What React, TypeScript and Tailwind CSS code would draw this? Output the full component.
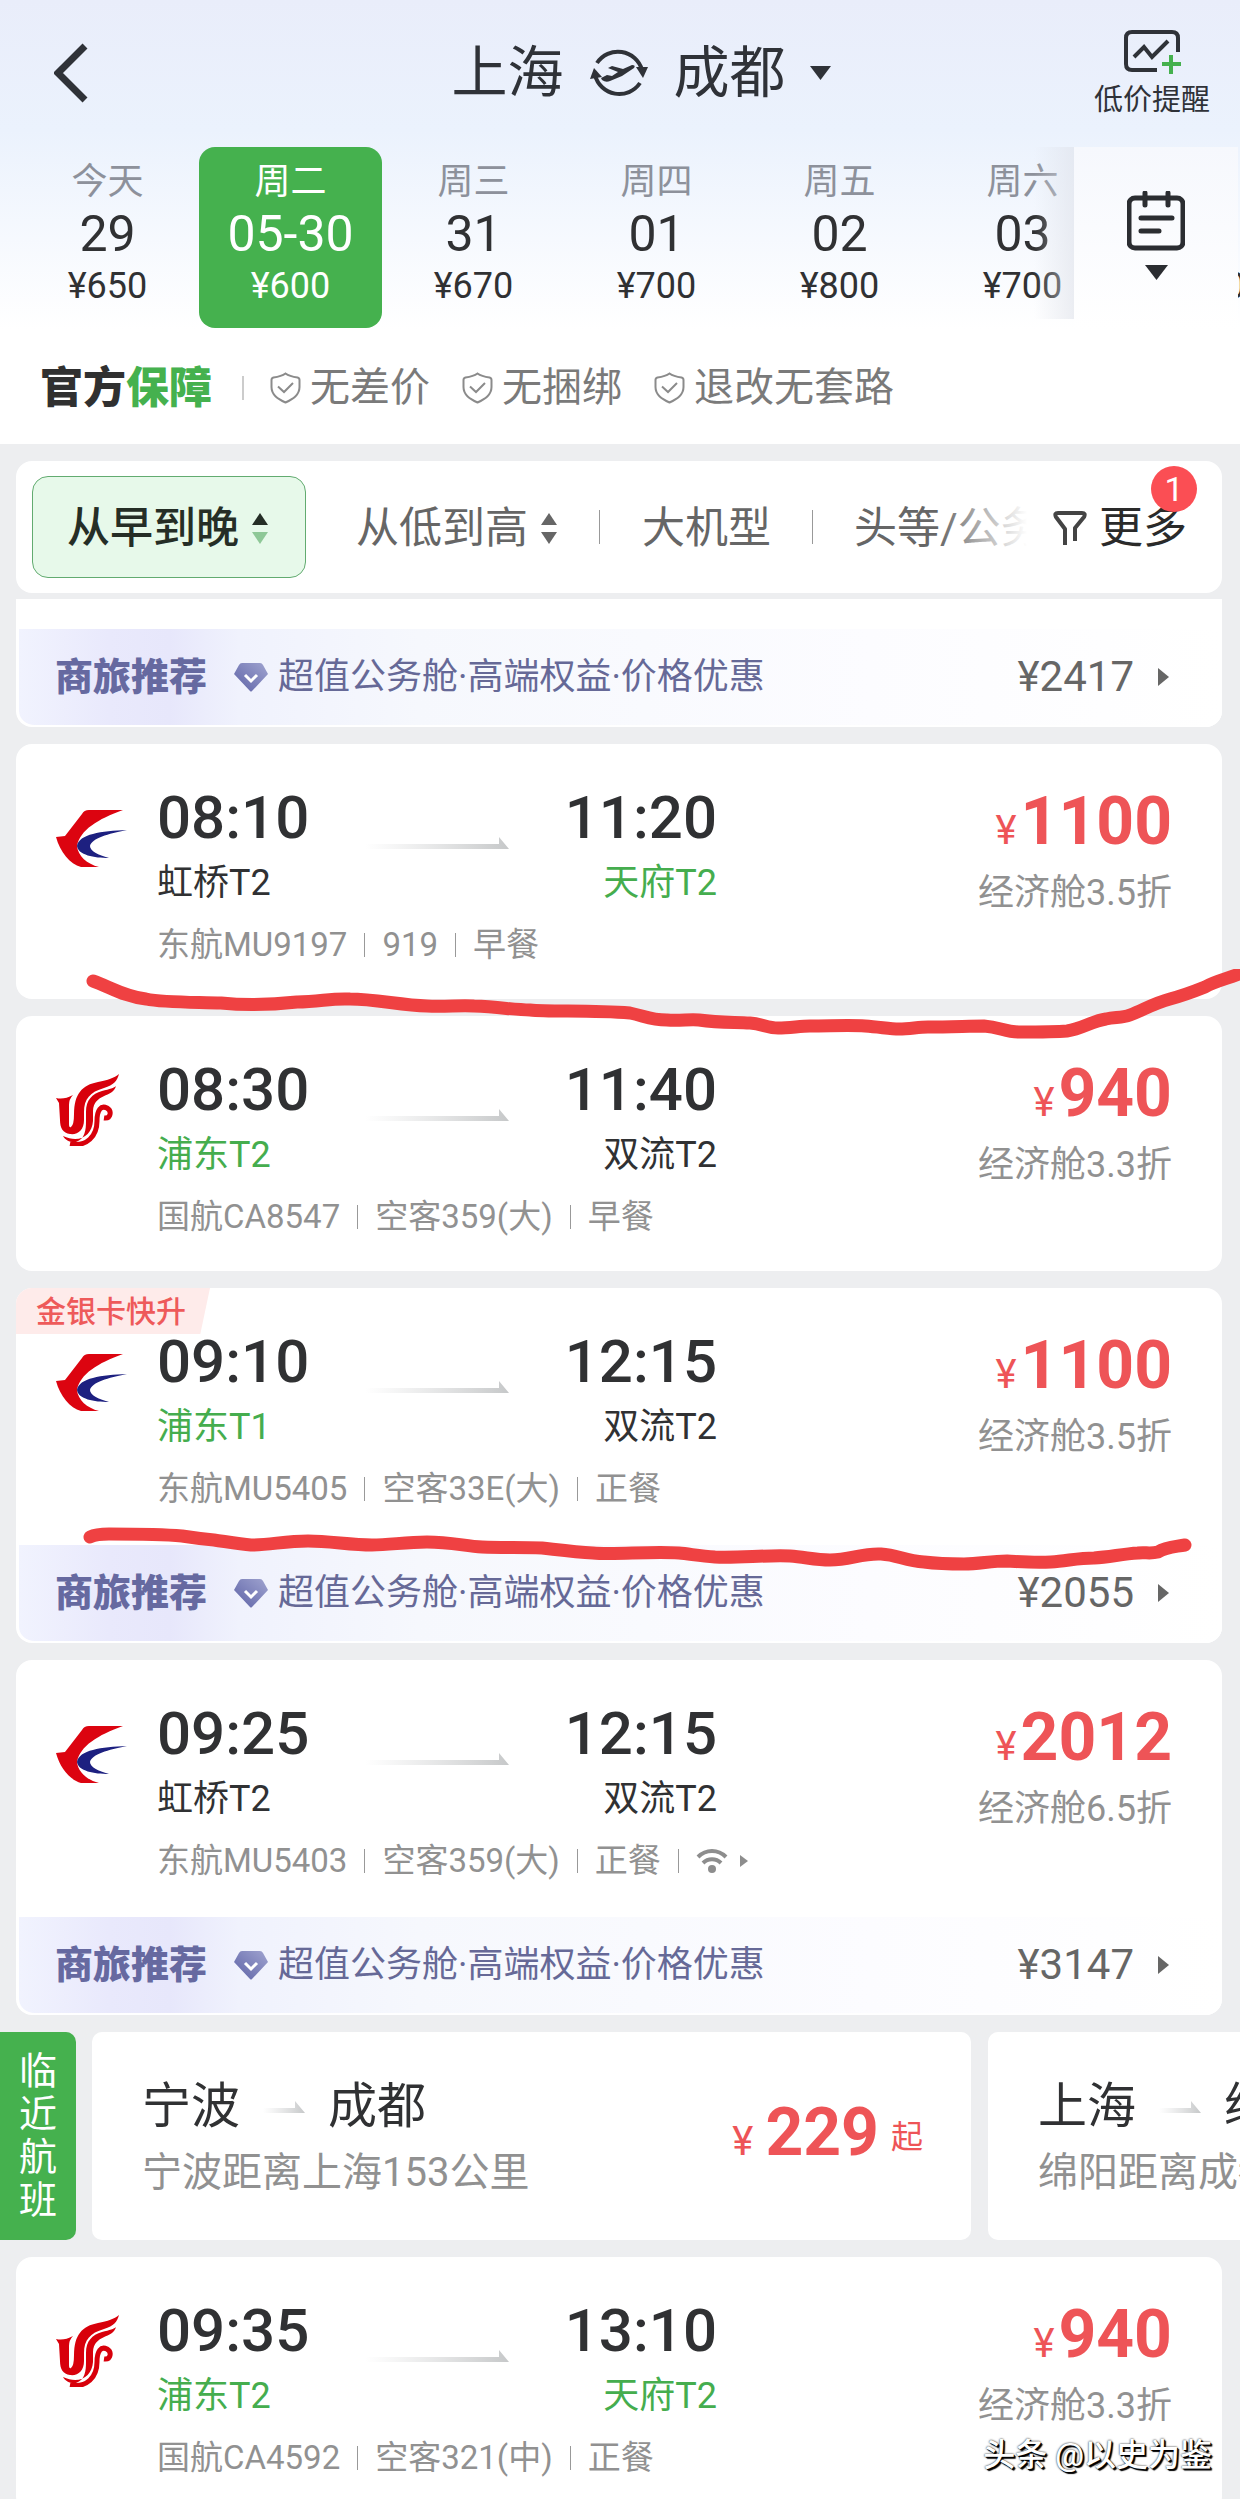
import clsx from "clsx";

type Airline = "mu" | "ca";

type Flight = {
  airline: Airline;
  depart: string;
  arrive: string;
  from: string;
  to: string;
  fromGreen?: boolean;
  toGreen?: boolean;
  price: string;
  cabin: string;
  meta: string[];
  wifi?: boolean;
  tag?: string;
  business?: string;
  mark?: string;
};

const dates = [
  { week: "今天", day: "29", price: "¥650" },
  { week: "周二", day: "05-30", price: "¥600", active: true },
  { week: "周三", day: "31", price: "¥670" },
  { week: "周四", day: "01", price: "¥700" },
  { week: "周五", day: "02", price: "¥800" },
  { week: "周六", day: "03", price: "¥700" },
  { week: "周日", day: "04", price: "¥700" },
];

const promises = ["无差价", "无捆绑", "退改无套路"];

const flights: Flight[] = [
  {
    airline: "mu",
    depart: "08:10",
    arrive: "11:20",
    from: "虹桥T2",
    to: "天府T2",
    toGreen: true,
    price: "1100",
    cabin: "经济舱3.5折",
    meta: ["东航MU9197", "919", "早餐"],
    mark: "M93 12C108 17 125 28 146 30C165 34 200 33 221 34C240 36 270 36 297 33C320 33 330 29 350 30C375 30 400 36 427 37C445 38 460 36 474 37C500 38 515 41 530 41C550 43 590 41 630 44C645 47 650 51 667 51C680 52 690 50 699 51C720 54 735 53 750 54C762 55 768 59 778 59C790 59 800 57 810 57C830 57 850 56 865 57C880 58 890 60 899 60C910 60 918 58 928 58C950 58 970 57 984 57C1000 58 1005 63 1019 63C1040 63 1055 63 1067 62C1082 60 1092 52 1106 50C1115 48 1122 49 1130 46C1145 40 1155 34 1170 30C1185 26 1195 22 1205 18C1215 12 1230 9 1244 3",
  },
  {
    airline: "ca",
    depart: "08:30",
    arrive: "11:40",
    from: "浦东T2",
    to: "双流T2",
    fromGreen: true,
    price: "940",
    cabin: "经济舱3.3折",
    meta: ["国航CA8547", "空客359(大)", "早餐"],
  },
  {
    airline: "mu",
    depart: "09:10",
    arrive: "12:15",
    from: "浦东T1",
    to: "双流T2",
    fromGreen: true,
    price: "1100",
    cabin: "经济舱3.5折",
    meta: ["东航MU5405", "空客33E(大)", "正餐"],
    tag: "金银卡快升",
    business: "¥2055",
    mark: "M90 24C96 21 102 21 109 21C140 21 160 21 182 23C195 25 203 26 214 27C228 29 240 31 251 32C270 32 285 28 308 28C330 28 350 32 372 32C390 32 405 29 427 29C450 29 465 33 482 34C505 35 520 34 542 35C560 37 575 39 593 40C615 42 650 38 679 40C690 41 700 43 715 44C740 45 765 42 790 43C805 44 815 47 830 47C850 47 862 40 881 41C898 42 905 48 924 49C940 51 950 51 964 51C980 51 990 48 1007 48C1025 49 1035 50 1051 49C1067 48 1078 45 1094 45C1110 44 1122 41 1138 40C1145 39 1150 41 1158 39C1166 34 1174 34 1185 32",
  },
  {
    airline: "mu",
    depart: "09:25",
    arrive: "12:15",
    from: "虹桥T2",
    to: "双流T2",
    price: "2012",
    cabin: "经济舱6.5折",
    meta: ["东航MU5403", "空客359(大)", "正餐"],
    wifi: true,
    business: "¥3147",
  },
];

const lastFlight: Flight = {
  airline: "ca",
  depart: "09:35",
  arrive: "13:10",
  from: "浦东T2",
  to: "天府T2",
  fromGreen: true,
  toGreen: true,
  price: "940",
  cabin: "经济舱3.3折",
  meta: ["国航CA4592", "空客321(中)", "正餐"],
};

function SwapIcon() {
  return (
    <svg className="h-[54px] w-[58px]" viewBox="0 0 58 54" fill="none">
      <path d="M7 17A25 25 0 0 1 52 24" stroke="#2f3238" strokeWidth="4" />
      <path d="M50 37A25 25 0 0 1 5 29" stroke="#2f3238" strokeWidth="4" />
      <path d="M46 21L58 21L53 32Z" fill="#2f3238" />
      <path d="M0 33L4 22L12 31Z" fill="#2f3238" />
      <path
        d="M11 32L17 29L22 30L28 26L18 22L22 20L33 23L42 19Q46 19 44 22L32 30L20 35Q16 37 12 34Z"
        fill="#2f3238"
      />
    </svg>
  );
}

function AlertIcon() {
  return (
    <svg className="h-[46px] w-[58px]" viewBox="0 0 58 46" fill="none">
      <path
        d="M34 40H9Q3 40 3 34V8Q3 2 9 2H49Q55 2 55 8V22"
        stroke="#2f3238"
        strokeWidth="4"
      />
      <path d="M11 27L21 17L29 27L45 11" stroke="#2f3238" strokeWidth="4" />
      <path d="M39 34H58M48 25V44" stroke="#45b14e" strokeWidth="4" />
    </svg>
  );
}

function CalendarIcon() {
  return (
    <svg className="h-[60px] w-[58px]" viewBox="0 0 58 60" fill="none">
      <rect x="2" y="7" width="54" height="50" rx="6" stroke="#2b2d31" strokeWidth="5" />
      <path
        d="M18 2V14M41 2V14M14 27H45M14 40H32"
        stroke="#2b2d31"
        strokeWidth="5"
        strokeLinecap="round"
      />
    </svg>
  );
}

function ShieldIcon() {
  return (
    <svg className="h-8 w-[31px]" viewBox="0 0 31 32" fill="none">
      <path
        d="M15.500 1.500C12 4 7 5 3.500 5.500Q1.500 6 1.500 8V15C1.500 23 8 27 15.500 30.500C23 27 29.500 23 29.500 15V8Q29.500 6 27.500 5.500C24 5 19 4 15.500 1.500Z"
        stroke="#8b8b8b"
        strokeWidth="2"
      />
      <path d="M8 14.500L14 20L23 11" stroke="#8b8b8b" strokeWidth="2" />
    </svg>
  );
}

function SortIcon({ className }: { className: string }) {
  return (
    <svg className={clsx("h-[31px] w-4 shrink-0", className)} viewBox="0 0 16 31">
      <path d="M8 0L16 12H0Z" fill="currentColor" />
      <path d="M8 31L16 19H0Z" fill="var(--down,currentColor)" />
    </svg>
  );
}

function FunnelIcon() {
  return (
    <svg className="h-9 w-[34px]" viewBox="0 0 34 36" fill="none">
      <path
        d="M12 35V19L3 7Q1 3 5 3H29Q33 3 31 7L22 18V31"
        stroke="#444"
        strokeWidth="4"
        strokeLinejoin="round"
      />
    </svg>
  );
}

function GemIcon() {
  return (
    <svg className="h-[30px] w-[34px]" viewBox="0 0 34 30">
      <defs>
        <linearGradient id="gem" x1="0" y1="1" x2="1" y2="0">
          <stop offset="0" stopColor="#5d62a6" />
          <stop offset="1" stopColor="#a0a4d0" />
        </linearGradient>
      </defs>
      <path d="M8 1H26Q28 1 29 3L34 12L18 29Q17 30 16 29L0 12L5 3Q6 1 8 1Z" fill="url(#gem)" />
      <path d="M11 13L17 19L23 13" fill="none" stroke="#fff" strokeWidth="3" />
    </svg>
  );
}

function MuLogo() {
  return (
    <svg className="h-[57px] w-[71px]" viewBox="0 0 71 57">
      <path
        d="M33 0H67C42 9 24 20 21 36C22 46 31 54 43 57H25C14 54 4 42 0 27L9 26L26 4Q28 0 33 0Z"
        fill="#dc0410"
      />
      <path
        d="M71 20C45 21 23 24 21 36C22 45 38 48 53 48C42 45 34 41 34 36C36 28 52 24 71 20Z"
        fill="#1d2080"
      />
    </svg>
  );
}

function CaLogo() {
  return (
    <svg className="h-[72px] w-[63px]" viewBox="0 0 63 72" fill="none">
      <path
        d="M0 24Q8 26 17 21Q13 25 13 31V50Q13 54 15 53Q18 51 18 40C18 20 26 11 42 8C52 6 58 4 63 0C61 7 58 11 48 14C34 18 28 25 28 38V46C28 56 22 61 14 60C7 59 4 54 4 46L3 29Z"
        fill="#d8000b"
      />
      <path
        d="M60 12C57 24 38 19 37 37V47C36 61 24 70 7 62C9 66 15 69 20 68C29 65 30 56 30 47V38C30 26 36 20 46 17C54 15 58 14 60 12Z"
        fill="#d8000b"
      />
      <path
        d="M14 70C31 73 41 62 41 47C41 36 45 31 51 34C56 37 55 45 48 44"
        stroke="#d8000b"
        strokeWidth="5"
      />
    </svg>
  );
}

function RouteArrow() {
  return (
    <svg className="mt-[51px] h-3 w-36" viewBox="0 0 144 12">
      <defs>
        <linearGradient id="route" x1="0" x2="1">
          <stop offset="0" stopColor="#d2d3d4" stopOpacity="0" />
          <stop offset="1" stopColor="#c6c8c9" />
        </linearGradient>
      </defs>
      <path d="M0 7H134V0L144 12H0Z" fill="url(#route)" />
    </svg>
  );
}

function ShortArrow() {
  return (
    <svg className="h-3 w-[42px]" viewBox="0 0 42 12">
      <defs>
        <linearGradient id="short" x1="0" x2="1">
          <stop offset="0" stopColor="#d2d3d4" stopOpacity="0" />
          <stop offset="1" stopColor="#c6c8c9" />
        </linearGradient>
      </defs>
      <path d="M0 7H32V0L42 12H0Z" fill="url(#short)" />
    </svg>
  );
}

function WifiIcon() {
  return (
    <svg className="h-[26px] w-[32px]" viewBox="0 0 32 26" fill="none">
      <path d="M2 9C10 1 22 1 30 9M7 15C12 10 20 10 25 15" stroke="#8d8d8d" strokeWidth="4" />
      <circle cx="16" cy="21" r="4" fill="#8d8d8d" />
    </svg>
  );
}

function BusinessBar({ price }: { price: string }) {
  return (
    <a
      href="#business"
      className="ml-[3px] flex h-[100px] items-center rounded-b-2xl border-y-2 border-white bg-[linear-gradient(90deg,#f1f3fe_0px,#e9e9fc_90px,#e7e7fb_150px,#f0f2fd_220px,#f6f8fd_400px,#fcfcff_850px,#ffffff_100%)] pl-9 pr-[53px] leading-[48px]"
    >
      <span className="text-[38px] font-black text-[#6669a0]">商旅推荐</span>
      <span className="ml-[27px] mr-[10px]">
        <GemIcon />
      </span>
      <span className="text-4xl leading-[48px] text-[#666997]">超值公务舱·高端权益·价格优惠</span>
      <span className="ml-auto text-[42px] text-[#666]">{price}</span>
      <svg className="ml-6 h-[18px] w-[11px]" viewBox="0 0 11 18">
        <path d="M0 0L11 9L0 18Z" fill="#666" />
      </svg>
    </a>
  );
}

function Stop({ time, airport, green }: { time: string; airport: string; green?: boolean }) {
  return (
    <>
      <div className="text-[60px] font-medium leading-[64px] text-[#303133]">{time}</div>
      <div
        className={clsx(
          "mt-[11px] text-4xl leading-[44px]",
          green ? "text-[#45ad4e]" : "text-[#303133]"
        )}
      >
        {airport}
      </div>
    </>
  );
}

function FlightCard({ flight }: { flight: Flight }) {
  return (
    <div className="relative pl-4 pr-[18px]">
      <article className="relative rounded-2xl bg-white">
        {flight.tag && (
          <div className="absolute left-0 top-0 rounded-tl-2xl bg-[#feebea] pl-5 pr-6 pt-0.5 text-[30px] font-medium leading-[44px] text-[#ee5a5a] [clip-path:polygon(0_0,100%_0,95%_100%,0_100%)]">
            {flight.tag}
          </div>
        )}
        <div className="flex pb-[34px] pl-10 pr-[50px] pt-[42px]">
          <div className="mt-4 flex h-[72px] w-[101px] shrink-0 items-center">
            {flight.airline === "mu" ? <MuLogo /> : <CaLogo />}
          </div>
          <div>
            <div className="flex w-[560px] justify-between">
              <div>
                <Stop time={flight.depart} airport={flight.from} green={flight.fromGreen} />
              </div>
              <RouteArrow />
              <div className="text-right">
                <Stop time={flight.arrive} airport={flight.to} green={flight.toGreen} />
              </div>
            </div>
            <div className="mt-5 flex items-center text-[33px] leading-10 text-[#919191]">
              {flight.meta.map((item, i) => (
                <div key={item} className="flex items-center">
                  {i > 0 && <span className="mx-[17px] h-6 w-px bg-[#999]" />}
                  {item}
                </div>
              ))}
              {flight.wifi && (
                <>
                  <span className="mx-[17px] h-6 w-px bg-[#999]" />
                  <WifiIcon />
                  <svg className="ml-3 h-3 w-2" viewBox="0 0 8 12">
                    <path d="M0 0L8 6L0 12Z" fill="#8d8d8d" />
                  </svg>
                </>
              )}
            </div>
          </div>
          <div className="ml-auto mt-1 flex flex-col items-end">
            <div className="flex h-16 items-baseline leading-[64px] text-[#ee5457]">
              <span className="mr-1 text-[40px]">¥</span>
              <span className="text-[66px] font-bold">{flight.price}</span>
            </div>
            <div className="mt-[17px] text-4xl leading-[44px] text-[#919191]">{flight.cabin}</div>
          </div>
        </div>
        {flight.business && <BusinessBar price={flight.business} />}
      </article>
      {flight.mark && (
        <svg
          className="pointer-events-none absolute left-0 top-[225px] z-10 w-full"
          viewBox="0 0 1240 80"
          fill="none"
        >
          <path
            d={flight.mark}
            stroke="#ef4142"
            strokeWidth="13"
            strokeLinecap="round"
            strokeLinejoin="round"
          />
        </svg>
      )}
    </div>
  );
}

function NearbyCard({ from, to, note, price }: { from: string; to: string; note: string; price?: string }) {
  return (
    <a
      href="#nearby"
      className="flex h-[208px] w-[879px] shrink-0 items-center rounded-[10px] bg-white pl-[50px] pr-12 pt-0.5"
    >
      <div className="shrink-0">
        <div className="flex items-center text-[49px] leading-[64px] text-[#303133]">
          {from}
          <span className="mx-[23px]">
            <ShortArrow />
          </span>
          {to}
        </div>
        <div className="mt-2 text-[40px] leading-[52px] text-[#919191]">{note}</div>
      </div>
      {price && (
        <div className="ml-auto flex items-baseline text-[#ee5457] leading-[64px]">
          <span className="mr-3 text-[40px]">¥</span>
          <span className="text-[66px] font-bold">{price}</span>
          <span className="ml-3 self-center text-[32px]">起</span>
        </div>
      )}
    </a>
  );
}

function App() {
  return (
    <div className="relative h-screen overflow-hidden bg-[#edeef0] font-[Roboto,'Noto_Sans_CJK_SC',sans-serif]">
      <header className="bg-white bg-[linear-gradient(180deg,#e9edfa_0px,#ebf2fd_130px,#ffffff_330px)]">
        <div className="grid h-[142px] grid-cols-[1fr_auto_1fr] items-center pl-[54px] pr-3 pt-[3px]">
          <button aria-label="返回" className="w-8">
            <svg className="h-[60px] w-[34px]" viewBox="0 0 34 60" fill="none">
              <path d="M31 3L4 30L31 57" stroke="#2f3238" strokeWidth="7" />
            </svg>
          </button>
          <h1 className="flex items-center text-[56px] leading-[64px] text-[#2f3238]">
            上海
            <button aria-label="交换" className="mx-[26px]">
              <SwapIcon />
            </button>
            成都
            <svg className="ml-6 h-[14px] w-[21px]" viewBox="0 0 21 14">
              <path d="M0 0H21L10.500 14Z" fill="#2f3238" />
            </svg>
          </h1>
          <button className="mr-[18px] flex flex-col items-center justify-self-end pt-0.5 text-[29px] leading-9 text-[#2f3238]">
            <span className="mb-1.5">
              <AlertIcon />
            </span>
            低价提醒
          </button>
        </div>

        <div className="relative mt-[5px] overflow-hidden">
          <div className="flex pl-4">
            {dates.map((d) => (
              <button
                key={d.week}
                className={clsx(
                  "h-[181px] w-[183px] shrink-0 rounded-2xl pb-[22px] pt-[13px] text-center",
                  d.active ? "bg-[#45b14e] text-white" : "text-[#303133]"
                )}
              >
                <div
                  className={clsx("text-4xl leading-[44px]", d.active ? "text-white" : "text-[#8d919b]")}
                >
                  {d.week}
                </div>
                <div className="mt-0.5 text-[50px] leading-[56px]">{d.day}</div>
                <div className="mt-1 text-4xl leading-10">{d.price}</div>
              </button>
            ))}
          </div>
          <div className="pointer-events-none absolute right-[166px] top-0 h-[172px] w-10 bg-linear-to-r from-transparent to-[#dfe2ea]/60" />
          <button
            aria-label="日历"
            className="absolute right-0.5 top-0 flex h-[181px] w-[164px] flex-col items-center bg-linear-to-b from-[#f6f8fd] to-white pt-11"
          >
            <CalendarIcon />
            <svg className="mt-[14px] h-[15px] w-[23px] shrink-0" viewBox="0 0 23 15">
              <path d="M0 0H23L11.500 15Z" fill="#2b2d31" />
            </svg>
          </button>
        </div>

        <div className="flex h-[116px] items-center pl-10 pt-1 text-[40px] leading-[52px] text-[#7a7a7a]">
          <span className="text-[43px] font-black text-[#303030]">
            官方<span className="text-[#45b14e]">保障</span>
          </span>
          <span className="ml-[30px] mr-[26px] h-6 w-0.5 bg-[#ccc]" />
          <ul className="flex gap-8">
            {promises.map((p) => (
              <li key={p} className="flex items-center gap-[9px]">
                <ShieldIcon />
                {p}
              </li>
            ))}
          </ul>
        </div>
      </header>

      <main className="flex flex-col gap-[17px] pt-[17px]">
        <div className="flex flex-col gap-1.5 pl-4 pr-[18px]">
          <div className="flex h-[132px] items-center rounded-2xl bg-white pl-4 pr-[35px] text-[43px] leading-[56px] text-[#666]">
            <div className="relative flex min-w-0 flex-1 items-center overflow-hidden whitespace-nowrap">
              <button className="flex h-[102px] shrink-0 items-center rounded-2xl border border-[#62ab70] bg-[#e7f9ea] pl-[34px] pr-[37px] pt-0.5 font-medium text-[#252e26]">
                从早到晚
                <SortIcon className="ml-[13px] [--down:#8ec897]" />
              </button>
              <button className="ml-[50px] flex shrink-0 items-center pt-0.5">
                从低到高
                <SortIcon className="ml-[13px]" />
              </button>
              <span className="mx-[42px] h-[34px] w-px shrink-0 bg-[#999]" />
              <button className="shrink-0 pt-0.5">大机型</button>
              <span className="mx-[41px] h-[34px] w-px shrink-0 bg-[#999]" />
              <button className="shrink-0 pt-0.5">头等/公务舱</button>
              <div className="absolute inset-y-0 right-0 w-[100px] bg-linear-to-r from-transparent to-white to-90%" />
            </div>
            <button className="relative ml-4 flex shrink-0 items-center pt-0.5 text-[44px] text-[#2a2a2a]">
              <span className="mr-3">
                <FunnelIcon />
              </span>
              更多
              <span className="absolute -right-2.5 -top-8 flex size-[46px] items-center justify-center rounded-full bg-[#fb4e54] text-[34px] leading-none text-white">
                1
              </span>
            </button>
          </div>
          <div className="rounded-b-2xl bg-white pt-7">
            <BusinessBar price="¥2417" />
          </div>
        </div>

        {flights.map((f) => (
          <FlightCard key={f.depart} flight={f} />
        ))}

        <section className="flex overflow-hidden">
          <h2 className="mr-4 flex w-[76px] shrink-0 items-center rounded-r-[10px] bg-[#45b14e] px-[19px] text-[38px] leading-[43px] text-white">
            临近航班
          </h2>
          <div className="flex gap-[17px]">
            <NearbyCard from="宁波" to="成都" note="宁波距离上海153公里" price="229" />
            <NearbyCard from="上海" to="绵阳" note="绵阳距离成都" />
          </div>
        </section>

        <FlightCard flight={lastFlight} />
      </main>

      <div className="absolute bottom-6 right-7 text-[32px] font-medium leading-10 text-white [text-shadow:2px_2px_1px_#000,1px_1px_0_#000,0_0_2px_#000]">
        头条 @以史为鉴
      </div>
    </div>
  );
}

export default App;
